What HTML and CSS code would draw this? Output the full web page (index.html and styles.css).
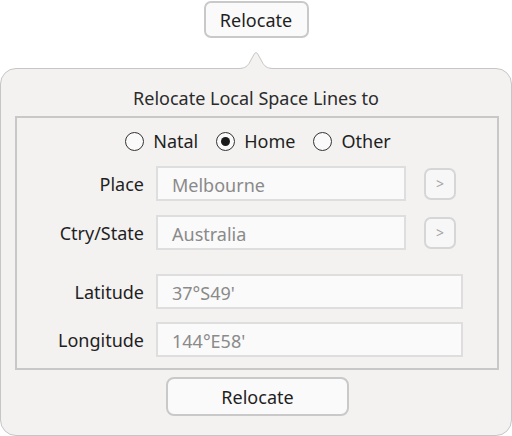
FILE: index.html
```html
<!DOCTYPE html>
<html>
<head>
<meta charset="utf-8">
<link rel="stylesheet" href="styles.css">
</head>
<body>
<div class="top">
  <button class="btn top-btn">Relocate</button>
</div>
<div class="popover">
  <svg class="arrow" width="36" height="19" viewBox="0 0 36 19">
    <path d="M0,18.5 L0,17.5 C6,17.5 8.5,16 11,12.5 L16.5,2.5 Q18,0.5 19.5,2.5 L25,12.5 C27.5,16 30,17.5 36,17.5 L36,19 Z" fill="#f3f2f1"/>
    <path d="M0,17.5 C6,17.5 8.5,16 11,12.5 L16.5,2.5 Q18,0.5 19.5,2.5 L25,12.5 C27.5,16 30,17.5 36,17.5" fill="none" stroke="#c6c6c6" stroke-width="1"/>
  </svg>
  <div class="title">Relocate Local Space Lines to</div>
  <div class="group">
    <div class="radios">
      <label class="radio"><span class="circle"></span>Natal</label>
      <label class="radio"><span class="circle checked"></span>Home</label>
      <label class="radio"><span class="circle"></span>Other</label>
    </div>
    <div class="row place">
      <span class="lbl">Place</span>
      <span class="field short">Melbourne</span>
      <span class="go">&gt;</span>
    </div>
    <div class="row ctry">
      <span class="lbl">Ctry/State</span>
      <span class="field short">Australia</span>
      <span class="go">&gt;</span>
    </div>
    <div class="row lat">
      <span class="lbl">Latitude</span>
      <span class="field long">37°S49'</span>
    </div>
    <div class="row lon">
      <span class="lbl">Longitude</span>
      <span class="field long">144°E58'</span>
    </div>
  </div>
  <div class="bottom">
    <button class="btn bottom-btn">Relocate</button>
  </div>
</div>
</body>
</html>
```
FILE: styles.css
```css
html, body {
  margin: 0;
  padding: 0;
  background: #ffffff;
}
body {
  width: 512px;
  height: 436px;
  overflow: hidden;
  font-family: "Noto Sans", "Open Sans", sans-serif;
  font-size: 18px;
  color: #1f1f1f;
}
.top {
  display: flex;
  justify-content: center;
  padding-top: 1px;
  height: 68px;
  box-sizing: border-box;
}
.btn {
  font-family: inherit;
  font-size: 18px;
  color: #1f1f1f;
  background: #fafafa;
  border: 2px solid #c9c9c9;
  padding: 0;
}
.top-btn {
  width: 105px;
  height: 37px;
  border-radius: 7px;
}
.popover {
  position: relative;
  box-sizing: border-box;
  width: 512px;
  height: 368px;
  background: #f3f2f1;
  border: 1px solid #c6c6c6;
  border-radius: 16px;
  padding: 0 14px 0 14px;
}
.arrow {
  position: absolute;
  left: 237px;
  top: -18px;
}
.title {
  text-align: center;
  color: #2b2b2b;
  height: 47px;
  line-height: 26px;
  padding-top: 16px;
  box-sizing: border-box;
}
.group {
  box-sizing: border-box;
  width: 484px;
  height: 254px;
  border: 2px solid #c8c8c8;
  padding-top: 10px;
}
.radios {
  display: flex;
  justify-content: center;
  gap: 18px;
  height: 26px;
  align-items: center;
  margin-left: 2px;
}
.radio {
  display: flex;
  align-items: center;
  gap: 9px;
}
.circle {
  box-sizing: border-box;
  width: 19px;
  height: 19px;
  border-radius: 50%;
  border: 1.5px solid #333;
  background: #fafafa;
  display: flex;
  align-items: center;
  justify-content: center;
}
.circle.checked::after {
  content: "";
  width: 9px;
  height: 9px;
  border-radius: 50%;
  background: #1a1a1a;
}
.row {
  display: flex;
  align-items: center;
  height: 35px;
}
.row.place { margin-top: 12px; }
.row.ctry { margin-top: 14px; }
.row.lat { margin-top: 24px; }
.row.lon { margin-top: 13px; }
.lbl {
  width: 127px;
  text-align: right;
  margin-right: 12px;
}
.field {
  box-sizing: border-box;
  height: 35px;
  background: #fafafa;
  border: 2px solid #dedede;
  color: #8a8a8a;
  padding-left: 14px;
  padding-top: 2px;
  display: flex;
  align-items: center;
}
.field.short { width: 250px; }
.field.long { width: 307px; }
.go {
  box-sizing: border-box;
  margin-left: 18px;
  width: 32px;
  height: 32px;
  border: 2px solid #d6d6d6;
  border-radius: 7px;
  background: #f7f7f7;
  color: #a3a3a3;
  font-size: 14px;
  display: flex;
  align-items: center;
  justify-content: center;
}
.bottom {
  display: flex;
  justify-content: center;
  padding-top: 7px;
}
.bottom-btn {
  width: 183px;
  height: 39px;
  border-radius: 8px;
  margin-left: 3px;
}
```
